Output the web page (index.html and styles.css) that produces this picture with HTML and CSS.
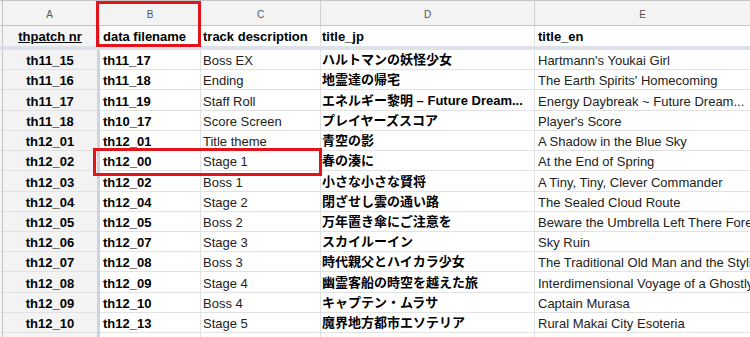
FILE: index.html
```html
<!DOCTYPE html>
<html>
<head>
<meta charset="utf-8">
<link rel="stylesheet" href="styles.css">
</head>
<body>
<div class="sheet">
  <div class="row letters">
    <div class="stub"></div>
    <div class="c">A</div>
    <div class="fz fz-l"></div>
    <div class="c">B</div>
    <div class="c">C</div>
    <div class="c">D</div>
    <div class="c">E</div>
  </div>
  <div class="row head">
    <div class="stub"></div>
    <div class="a"><span class="u">thpatch nr</span></div>
    <div class="fz"></div>
    <div class="b">data filename</div>
    <div class="t">track description</div>
    <div class="b d">title_jp</div>
    <div class="b e">title_en</div>
  </div>
  <div class="frozen-h"></div>
  <div class="rows">
    <div class="row data"><div class="stub"></div><div class="a">th11_15</div><div class="fz"></div><div class="b">th11_17</div><div class="t">Boss EX</div><div class="b d">ハルトマンの妖怪少女</div><div class="t e">Hartmann's Youkai Girl</div></div>
    <div class="row data"><div class="stub"></div><div class="a">th11_16</div><div class="fz"></div><div class="b">th11_18</div><div class="t">Ending</div><div class="b d">地霊達の帰宅</div><div class="t e">The Earth Spirits' Homecoming</div></div>
    <div class="row data"><div class="stub"></div><div class="a">th11_17</div><div class="fz"></div><div class="b">th11_19</div><div class="t">Staff Roll</div><div class="b d">エネルギー黎明 – Future Dream...</div><div class="t e">Energy Daybreak ~ Future Dream...</div></div>
    <div class="row data"><div class="stub"></div><div class="a">th11_18</div><div class="fz"></div><div class="b">th10_17</div><div class="t">Score Screen</div><div class="b d">プレイヤーズスコア</div><div class="t e">Player's Score</div></div>
    <div class="row data"><div class="stub"></div><div class="a">th12_01</div><div class="fz"></div><div class="b">th12_01</div><div class="t">Title theme</div><div class="b d">青空の影</div><div class="t e">A Shadow in the Blue Sky</div></div>
    <div class="row data"><div class="stub"></div><div class="a">th12_02</div><div class="fz"></div><div class="b">th12_00</div><div class="t">Stage 1</div><div class="b d">春の湊に</div><div class="t e">At the End of Spring</div></div>
    <div class="row data"><div class="stub"></div><div class="a">th12_03</div><div class="fz"></div><div class="b">th12_02</div><div class="t">Boss 1</div><div class="b d">小さな小さな賢将</div><div class="t e">A Tiny, Tiny, Clever Commander</div></div>
    <div class="row data"><div class="stub"></div><div class="a">th12_04</div><div class="fz"></div><div class="b">th12_04</div><div class="t">Stage 2</div><div class="b d">閉ざせし雲の通い路</div><div class="t e">The Sealed Cloud Route</div></div>
    <div class="row data"><div class="stub"></div><div class="a">th12_05</div><div class="fz"></div><div class="b">th12_05</div><div class="t">Boss 2</div><div class="b d">万年置き傘にご注意を</div><div class="t e">Beware the Umbrella Left There Forever</div></div>
    <div class="row data"><div class="stub"></div><div class="a">th12_06</div><div class="fz"></div><div class="b">th12_07</div><div class="t">Stage 3</div><div class="b d">スカイルーイン</div><div class="t e">Sky Ruin</div></div>
    <div class="row data"><div class="stub"></div><div class="a">th12_07</div><div class="fz"></div><div class="b">th12_08</div><div class="t">Boss 3</div><div class="b d">時代親父とハイカラ少女</div><div class="t e">The Traditional Old Man and the Stylish Girl</div></div>
    <div class="row data"><div class="stub"></div><div class="a">th12_08</div><div class="fz"></div><div class="b">th12_09</div><div class="t">Stage 4</div><div class="b d">幽霊客船の時空を越えた旅</div><div class="t e">Interdimensional Voyage of a Ghostly Passenger Ship</div></div>
    <div class="row data"><div class="stub"></div><div class="a">th12_09</div><div class="fz"></div><div class="b">th12_10</div><div class="t">Boss 4</div><div class="b d">キャプテン・ムラサ</div><div class="t e">Captain Murasa</div></div>
    <div class="row data"><div class="stub"></div><div class="a">th12_10</div><div class="fz"></div><div class="b">th12_13</div><div class="t">Stage 5</div><div class="b d">魔界地方都市エソテリア</div><div class="t e">Rural Makai City Esoteria</div></div>
    <div class="row data"><div class="stub"></div><div class="a"></div><div class="fz"></div><div class="b"></div><div class="t"></div><div class="b d"></div><div class="t e"></div></div>
  </div>
  <div class="mark mark-head"></div>
  <div class="mark mark-row"></div>
</div>
</body>
</html>
```
FILE: styles.css
```css
html, body {
  margin: 0;
  padding: 0;
  background: #fff;
  overflow: hidden;
}
.sheet {
  position: relative;
  width: 750px;
  height: 337px;
  overflow: hidden;
  font-family: "Liberation Sans", Arial, "Noto Sans CJK JP", sans-serif;
  font-size: 13px;
  color: #222;
}
.row {
  display: grid;
  grid-template-columns: 3px 94px 3px 101px 120px 214px 215px;
}
.row > div {
  box-sizing: border-box;
  white-space: nowrap;
  overflow: hidden;
}
.stub {
  background: #f3f3f3;
  border-right: 1px solid #c4c4c4;
}
.letters {
  height: 26px;
  background: #f3f3f3;
  border-top: 1px solid #c4c4c4;
  border-bottom: 1px solid #c4c4c4;
  box-sizing: border-box;
}
.letters .c {
  display: flex;
  align-items: center;
  justify-content: center;
  font-size: 10px;
  color: #555;
  border-right: 1px solid #cfcfcf;
  padding-top: 2px;
}
.letters .c:last-child { border-right: none; }
.letters .fz-l {
  background: #f3f3f3;
  border-right: none;
}
.head {
  height: 20px;
}
.head > div, .data > div {
  display: flex;
  align-items: flex-end;
  padding: 0 2px 1px;
  border-right: 1px solid #e2e2e2;
  border-bottom: 1px solid #e2e2e2;
}
.head > div {
  border-bottom: none;
  font-weight: bold;
  color: #000;
  padding-bottom: 2px;
}
.head > .b:nth-child(4), .data > .b:nth-child(4) { padding-left: 3px; }
.head > .d, .data > .d { padding-left: 1px; }
.head > .e, .data > .e { padding-left: 3px; border-right: none; }
.head > .stub, .data > .stub {
  padding: 0;
  border-right: 1px solid #c4c4c4;
}
.fz, .head > .fz, .data > .fz {
  background: #cdd4df;
  padding: 0;
  border: none;
}
.a {
  background: #f3f3f3;
  justify-content: center;
  font-weight: bold;
  color: #000;
}
.head > .a, .data > .a { border-right: none; }
.u { text-decoration: underline; }
.b {
  font-weight: bold;
  color: #000;
}
.frozen-h {
  height: 4px;
  background: #dde2ea;
}
.data {
  height: 20.23px;
}
.mark {
  position: absolute;
  border: 3px solid #e3131c;
  box-sizing: border-box;
}
.mark-head {
  left: 96px;
  top: 1px;
  width: 105px;
  height: 46px;
}
.mark-row {
  left: 93px;
  top: 148px;
  width: 229px;
  height: 28px;
}
```
